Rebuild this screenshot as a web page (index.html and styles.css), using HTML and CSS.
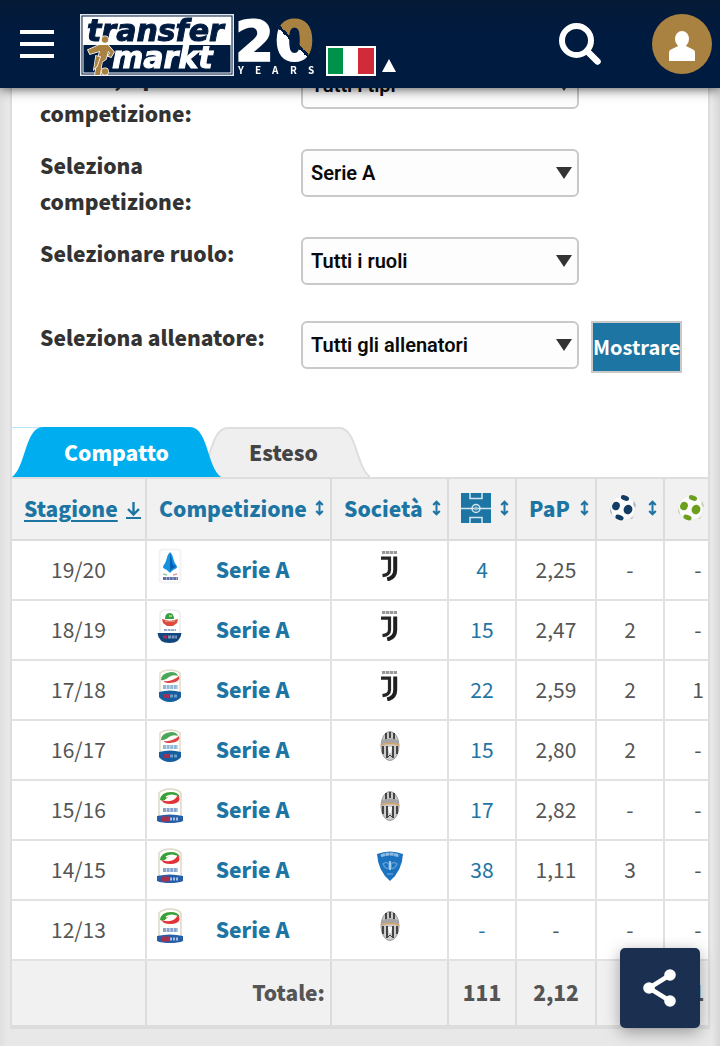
FILE: index.html
```html
<!DOCTYPE html>
<html lang="it">
<head>
<meta charset="utf-8">
<meta name="viewport" content="width=device-width, initial-scale=1">
<title>Transfermarkt</title>
<link rel="stylesheet" href="styles.css">
</head>
<body>
<svg class="defs" aria-hidden="true">
  <symbol id="sort" viewBox="0 0 9 16"><path d="M4.500 2v12M1.200 5l3.300-3.300L7.800 5M1.200 11l3.300 3.300L7.800 11" fill="none" stroke="#1d75a3" stroke-width="2"/></symbol>
  <symbol id="ball" viewBox="0 0 28 28">
    <circle cx="14" cy="14" r="12.500" fill="#fbfbfb" stroke="#ececec" stroke-width="1"/>
    <g fill="currentColor">
      <ellipse cx="16" cy="4" rx="4.300" ry="2.500" transform="rotate(22 16 4)"/>
      <ellipse cx="7" cy="12" rx="3.800" ry="4.300" transform="rotate(20 7 12)"/>
      <ellipse cx="19" cy="15.500" rx="4.300" ry="4.800" transform="rotate(20 19 15.500)"/>
      <ellipse cx="10.500" cy="23.500" rx="4.300" ry="2.500" transform="rotate(22 10.500 23.500)"/>
      <path d="M25 7l2 4-1 3-2-4zM1 14l2 5v2l-2-3zM21 25l4-3-2 3z" opacity=".3"/>
    </g>
  </symbol>
  <symbol id="league-19" viewBox="0 0 28 36">
    <rect x="3.500" y="1.500" width="21" height="33" rx="3" fill="#fff" stroke="#f3f3f3" stroke-width="2"/>
    <path d="M14 4c3 3 3 6 4 9 1 3 3 4 3 6 0 2-4 2-7 6-3-4-7-4-7-6 0-2 2-3 3-6 1-3 1-6 4-9z" fill="#1593e0"/>
    <path d="M14 5v18c2-3 5-3 6-5-3 0-4-3-4-6z" fill="#0a5fb5"/>
    <path d="M7 26l4 1" stroke="#8fd09b" stroke-width="1.500"/><path d="M17 27l4-1" stroke="#eb9a9a" stroke-width="1.500"/>
    <path d="M7 30.500h15" stroke="#5f70a8" stroke-width="3" stroke-dasharray="3 .4"/>
  </symbol>
  <symbol id="league-18" viewBox="0 0 28 36">
    <path d="M4 26V7q0-5 6-5h8q6 0 6 5v19z" fill="#fff" stroke="#f1f1f1" stroke-width="2"/>
    <path d="M9 11q0-6 4.500-6t4.500 6z" fill="#34a04a"/><path d="M13 7h3v2h-3z" fill="#bcc653"/>
    <path d="M6 11l8 2 8-2-1 4-4 3h-6l-4-3z" fill="#dd4b3e"/><path d="M9 13h10" stroke="#efb5a0" stroke-width="1"/>
    <path d="M8 22h12" stroke="#9aa9c6" stroke-width="2" stroke-dasharray="3 .6"/>
    <path d="M1.500 25h24q-1 10-12 10t-12-10z" fill="#12467f"/>
    <path d="M7 29h4" stroke="#a02f58" stroke-width="3"/><path d="M12 29h9" stroke="#7795bd" stroke-width="3" stroke-dasharray="3 .6"/>
  </symbol>
  <symbol id="league-17" viewBox="0 0 28 36">
    <path d="M4 5q4-3 10-3t10 3v25q-5 3-10 3T4 30z" fill="#fffefa" stroke="#e3dcc8" stroke-width="1.500"/>
    <path d="M5 12q0-7 10-8 6 0 7 4-5-2-9 1-4 4-8 3z" fill="#49a65a"/>
    <path d="M23 8q2 6-9 7-6 0-6-2 8 1 15-5z" fill="#dc4546"/>
    <path d="M7 19h15" stroke="#91b8d6" stroke-width="4" stroke-dasharray="3 .6"/>
    <path d="M3 24q11-3 22 0v5q-4 5-11 5T3 29z" fill="#155e9f"/>
    <path d="M8 28h5" stroke="#a02f58" stroke-width="4"/><path d="M14 28h8" stroke="#6f9cc6" stroke-width="3" stroke-dasharray="3 1"/>
  </symbol>
  <symbol id="league-15" viewBox="0 0 28 36">
    <path d="M3 5q4-4 11-4t11 4v28H3z" fill="#fffefa" stroke="#ddd8c8" stroke-width="1.500"/>
    <path d="M4 12q1-8 11-8 7 0 9 5-7-4-12 0-4 5-8 3z" fill="#38a038"/>
    <path d="M22 7q5 8-7 9-9 0-9-4 11 4 16-5z" fill="#e23238"/><path d="M10 9q5-3 9-1" stroke="#fff" stroke-width="1.500" fill="none"/>
    <path d="M7 22h15" stroke="#86a6d1" stroke-width="4" stroke-dasharray="3 .6"/>
    <path d="M1 28q13-3 26 0v5q-5 2-13 2T1 33z" fill="#275eaa"/>
    <path d="M5 31h8" stroke="#a8304f" stroke-width="5"/><path d="M14 31h9" stroke="#a6bedd" stroke-width="3" stroke-dasharray="2 1"/>
  </symbol>
  <symbol id="juve-new" viewBox="0 0 20 30">
    <path d="M2 1.500h15" stroke="#999" stroke-width="3" stroke-dasharray="3.300 .6"/>
    <path d="M1 7.200h8.500v11.500q0 5-7 6" fill="none" stroke="#262626" stroke-width="3.200"/>
    <path d="M15.200 5.500V19q0 7.500-8 9.500" fill="none" stroke="#202020" stroke-width="4"/>
  </symbol>
  <symbol id="juve-old" viewBox="0 0 20 30">
    <ellipse cx="10" cy="15" rx="9" ry="14.500" fill="#ccc" stroke="#999" stroke-width="1"/>
    <path d="M6 2v8M10 1v6M14 2v8M3 15v8M7 15v12M13 15v12M17 15v8" stroke="#444" stroke-width="2"/>
    <path d="M2 9q8-3 16 0v4q-8-2-16 0z" fill="#a5a5a5"/>
    <path d="M1 14q9-3 18 0" fill="none" stroke="#d6a260" stroke-width="1.500"/>
    <path d="M8 16h4l-1 6H9z" fill="#fafafa"/><path d="M7 27l3-3 3 3" stroke="#444" fill="none"/>
  </symbol>
  <symbol id="empoli" viewBox="0 0 28 30">
    <path d="M1 3q13-5 26 0-1 17-13 27Q2 20 1 3z" fill="#1b72bf"/>
    <path d="M5 5q9-4 18 0" fill="none" stroke="#8fbce3" stroke-width="3" stroke-dasharray="4 .5"/>
    <path d="M7 13q3-3 6 0v4q-3 2-6-4zM21 13q-3-3-6 0v4q3 2 6-4zM11 23h6" fill="none" stroke="#5c9ed6" stroke-width="1.500"/>
    <path d="M14 10v9" stroke="#a9cdec" stroke-width="2"/>
  </symbol>
  <symbol id="slope-left" viewBox="0 0 31 50"><path d="M0 50C14 40 13 0 31 0v50z" fill="currentColor"/></symbol>
</svg>

<header class="topbar">
  <button class="menu" aria-label="Menu"><span></span><span></span><span></span></button>
  <a class="brand" href="#" aria-label="Transfermarkt">
    <svg width="236" height="62" viewBox="0 0 236 62">
      <defs>
        <linearGradient id="zero" gradientUnits="userSpaceOnUse" x1="209" y1="33" x2="219" y2="23">
          <stop offset="0" stop-color="#fff"/><stop offset=".4" stop-color="#fff"/>
          <stop offset=".4" stop-color="#001b40"/><stop offset=".6" stop-color="#001b40"/>
          <stop offset=".6" stop-color="#a98141"/><stop offset="1" stop-color="#a98141"/>
        </linearGradient>
      </defs>
      <rect x=".75" y=".75" width="152.500" height="60.500" fill="#001b40" stroke="#e4e8ed" stroke-width="1.500"/>
      <rect x="3" y="3" width="148" height="56" fill="none" stroke="#fff" stroke-width="1"/>
      <path d="M3 3h148v28H3z" fill="#fff"/>
      <text class="wordmark" x="7" y="27" fill="#001b40" stroke="#001b40">transfer</text>
      <text class="wordmark" x="32" y="54" fill="#fff" stroke="#fff">markt</text>
      <g fill="#a98141" stroke="#fff" stroke-width="1.500" paint-order="stroke">
        <path d="M8 36l11-5h9l6 7-3 5-3-1 2-3-2-2-2 8-4 3-2 13h-5l2-14 3-10-10 3z"/>
        <path d="M16 42l4 1-3 9-3 3z"/>
        <circle cx="25" cy="25.500" r="3.200"/>
        <circle cx="25" cy="57.500" r="3.200"/>
      </g>
      <text class="twenty" x="155" y="46" fill="#fff" stroke="#fff">2</text>
      <text class="twenty" x="195" y="46" fill="url(#zero)" stroke="url(#zero)">0</text>
      <text class="years" x="158 175 192 210 228" y="60" fill="#fff">YEARS</text>
    </svg>
  </a>
  <button class="country" aria-label="Italia">
    <span class="flag"></span>
    <svg width="14" height="13" viewBox="0 0 14 13"><path d="M7 0l7 13H0z" fill="#fff"/></svg>
  </button>
  <button class="search" aria-label="Cerca">
    <svg width="42" height="42" viewBox="0 0 42 42"><circle cx="17.500" cy="17.500" r="14.500" fill="none" stroke="#fff" stroke-width="6"/><path d="M28 28l10.500 10.500" stroke="#fff" stroke-width="6.500" stroke-linecap="round"/></svg>
  </button>
  <button class="user" aria-label="Profilo">
    <svg width="26" height="30" viewBox="0 0 26 30"><ellipse cx="13" cy="8" rx="7" ry="8" fill="#fff"/><path d="M9 12h8v3l8 4q1 1 1 3v8H0v-8q0-2 1-3l8-4z" fill="#fff"/></svg>
  </button>
</header>

<main class="box">
  <form class="filters">
    <label for="type">Torneo, tipo di competizione:</label>
    <span class="select"><select id="type"><option>Tutti i tipi</option></select></span>
    <label for="competition">Seleziona competizione:</label>
    <span class="select"><select id="competition"><option>Serie A</option></select></span>
    <label for="role">Selezionare ruolo:</label>
    <span class="select"><select id="role"><option>Tutti i ruoli</option></select></span>
    <label for="coach">Seleziona allenatore:</label>
    <span class="select"><select id="coach"><option>Tutti gli allenatori</option></select></span>
    <button class="submit" type="button">Mostrare</button>
  </form>

  <nav class="tabs">
    <a class="tab active" href="#compatto">
      <svg width="31" height="50"><path d="M0 .5h31" stroke="#b9e6f8"/><use href="#slope-left"/></svg>
      <span>Compatto</span>
      <svg class="flip" width="31" height="50"><use href="#slope-left"/></svg>
    </a>
    <a class="tab" href="#esteso">
      <svg width="31" height="50"><use href="#slope-left"/><path d="M0 50C14 40 13 1 31 1" fill="none" stroke="#dedede" stroke-width="2"/></svg>
      <span>Esteso</span>
      <svg class="flip" width="31" height="50"><use href="#slope-left"/><path d="M0 50C14 40 13 1 31 1" fill="none" stroke="#dedede" stroke-width="2"/></svg>
    </a>
  </nav>

  <div class="scroller">
    <table>
      <colgroup><col class="c-season"><col class="c-comp"><col class="c-club"><col class="c-num"><col class="c-ppg"><col class="c-num"><col class="c-num"></colgroup>
      <thead>
        <tr>
          <th><a class="sorted" href="#"><span>Stagione</span><svg width="15" height="18" viewBox="0 0 15 18"><path d="M7.500 1v12M2 8l5.500 5.500L13 8" fill="none" stroke="#1d75a3" stroke-width="2.400"/><path d="M0 17h15" stroke="#1d75a3" stroke-width="2"/></svg></a></th>
          <th><a href="#">Competizione<svg width="9" height="16"><use href="#sort"/></svg></a></th>
          <th><a href="#">Società<svg width="9" height="16"><use href="#sort"/></svg></a></th>
          <th><a href="#" aria-label="Presenze"><svg width="30" height="30" viewBox="0 0 30 30"><path d="M0 0h30v30H0z" fill="#1d75a3"/><g fill="none" stroke="#d6e5ee" stroke-width="1.500"><path d="M0 15.500h30M9 0v5.500h12V0M9 30v-5.500h12V30"/><circle cx="15" cy="15.500" r="4"/></g><circle cx="15" cy="15.500" r="2" fill="#9cc0d6"/></svg><svg width="9" height="16"><use href="#sort"/></svg></a></th>
          <th><a href="#">PaP<svg width="9" height="16"><use href="#sort"/></svg></a></th>
          <th><a href="#" aria-label="Gol"><svg class="goals" width="28" height="28"><use href="#ball"/></svg><svg width="9" height="16"><use href="#sort"/></svg></a></th>
          <th><a href="#" aria-label="Assist"><svg class="assists" width="28" height="28"><use href="#ball"/></svg><svg width="9" height="16"><use href="#sort"/></svg></a></th>
        </tr>
      </thead>
      <tbody>
        <tr><td>19/20</td><td><div class="comp"><svg width="28" height="36"><use href="#league-19"/></svg><a href="#">Serie A</a></div></td><td><svg class="club" width="20" height="30"><use href="#juve-new"/></svg></td><td><a href="#">4</a></td><td>2,25</td><td>-</td><td>-</td></tr>
        <tr><td>18/19</td><td><div class="comp"><svg width="28" height="36"><use href="#league-18"/></svg><a href="#">Serie A</a></div></td><td><svg class="club" width="20" height="30"><use href="#juve-new"/></svg></td><td><a href="#">15</a></td><td>2,47</td><td>2</td><td>-</td></tr>
        <tr><td>17/18</td><td><div class="comp"><svg width="28" height="36"><use href="#league-17"/></svg><a href="#">Serie A</a></div></td><td><svg class="club" width="20" height="30"><use href="#juve-new"/></svg></td><td><a href="#">22</a></td><td>2,59</td><td>2</td><td>1</td></tr>
        <tr><td>16/17</td><td><div class="comp"><svg width="28" height="36"><use href="#league-17"/></svg><a href="#">Serie A</a></div></td><td><svg class="club" width="20" height="30"><use href="#juve-old"/></svg></td><td><a href="#">15</a></td><td>2,80</td><td>2</td><td>-</td></tr>
        <tr><td>15/16</td><td><div class="comp"><svg width="28" height="36"><use href="#league-15"/></svg><a href="#">Serie A</a></div></td><td><svg class="club" width="20" height="30"><use href="#juve-old"/></svg></td><td><a href="#">17</a></td><td>2,82</td><td>-</td><td>-</td></tr>
        <tr><td>14/15</td><td><div class="comp"><svg width="28" height="36"><use href="#league-15"/></svg><a href="#">Serie A</a></div></td><td><svg class="club" width="28" height="30"><use href="#empoli"/></svg></td><td><a href="#">38</a></td><td>1,11</td><td>3</td><td>-</td></tr>
        <tr><td>12/13</td><td><div class="comp"><svg width="28" height="36"><use href="#league-15"/></svg><a href="#">Serie A</a></div></td><td><svg class="club" width="20" height="30"><use href="#juve-old"/></svg></td><td><a href="#">-</a></td><td>-</td><td>-</td><td>-</td></tr>
      </tbody>
      <tfoot>
        <tr><td></td><td class="total">Totale:</td><td></td><td>111</td><td>2,12</td><td></td><td>1</td></tr>
      </tfoot>
    </table>
  </div>
</main>

<button class="share" aria-label="Condividi">
  <svg width="34" height="38" viewBox="0 0 34 38"><path d="M27 6L6 19l21 13" fill="none" stroke="#fff" stroke-width="4.500"/><g fill="#fff"><circle cx="27" cy="6" r="5.800"/><circle cx="6" cy="19" r="5.800"/><circle cx="27" cy="32" r="5.800"/></g></svg>
</button>
</body>
</html>
```
FILE: styles.css
```css
* { box-sizing: border-box; }
body {
  margin: 0;
  min-height: 100vh;
  padding: 0 10px 17px;
  background: linear-gradient(90deg, #e0e0e0, #e8e8e8 8px, #e8e8e8 calc(100% - 8px), #d6d6d6);
  color: #555;
  font: 21px/36px "Noto Sans CJK SC", "Noto Sans CJK JP", "Noto Sans", sans-serif;
}
svg { display: block; flex: none; }
a { color: #1d75a3; text-decoration: none; }
button { padding: 0; border: 0; background: none; font: inherit; cursor: pointer; }
.defs { position: absolute; width: 0; height: 0; }

.topbar {
  position: fixed;
  z-index: 5;
  top: 0;
  left: 0;
  right: 0;
  height: 88px;
  padding: 0 8px 0 20px;
  display: flex;
  align-items: center;
  background: linear-gradient(#061a36, #001b40 40%);
  box-shadow: 0 0 12px rgba(0, 0, 0, .8);
}
.menu { display: grid; gap: 8px; width: 34px; margin-right: 26px; }
.menu span { height: 4px; background: #fff; }
.brand { margin-top: 2px; }
.brand svg { overflow: visible; }
.wordmark { font: italic bold 30px "DejaVu Sans", sans-serif; stroke-width: 1px; }
.twenty { font: bold 56px "DejaVu Sans", sans-serif; stroke-width: 2px; }
.years { font: bold 10px "Noto Sans CJK SC", sans-serif; }
.country { display: flex; align-items: flex-end; gap: 6px; align-self: flex-end; margin: 0 auto 12px 10px; }
.country svg { margin-bottom: 4px; }
.flag {
  width: 50px;
  height: 30px;
  border: 2px solid #fff;
  background: linear-gradient(90deg, #00924a 33%, #fff 33%, #fff 66%, #cf2b38 66%);
}
.search { margin-right: 51px; }
.user {
  width: 60px;
  height: 60px;
  display: grid;
  place-items: center;
  padding-top: 4px;
  border-radius: 50%;
  background: #a98141;
}

.box { border: 2px solid #ddd; border-top: 0; border-bottom-width: 4px; background: #fff; }
.filters {
  display: grid;
  grid-template-columns: 249px 1fr 91px;
  grid-auto-rows: minmax(68px, auto);
  gap: 16px 12px;
  padding: 61px 26px 38px 28px;
  align-items: start;
}
.filters label {
  grid-column: 1;
  min-height: 72px;
  margin: -2px 0 2px;
  padding-right: 12px;
  color: #333;
  font-weight: 900;
}
.filters label:nth-of-type(n + 3) { min-height: 0; }
.select { position: relative; }
.select::after {
  content: "";
  position: absolute;
  right: 7px;
  top: 18px;
  width: 16px;
  height: 12px;
  background: #333;
  clip-path: polygon(0 0, 100% 0, 50% 100%);
  pointer-events: none;
}
select {
  display: block;
  width: 100%;
  height: 48px;
  padding: 0 28px 0 8px;
  border: 2px solid #c9c9c9;
  border-radius: 6px;
  background: #fdfdfd;
  color: #0a0a0a;
  appearance: none;
  font: 600 20px Roboto, sans-serif;
}
.submit {
  height: 52px;
  border: 2px solid #c9c9c9;
  background: #1d75a3;
  color: #fff;
  font-size: 20px;
  font-weight: bold;
}

.tabs { display: flex; }
.tab { display: flex; color: #efefef; }
.tab span {
  height: 50px;
  padding: 0 21px;
  border-top: 2px solid #dedede;
  background: #efefef;
  color: #444;
  font-weight: 900;
  line-height: 46px;
}
.tab.active { position: relative; z-index: 1; color: #00aeef; }
.tab.active span { border-top-color: #00aeef; background: #00aeef; color: #fff; }
.tab + .tab { margin-left: -24px; }
.flip { transform: scaleX(-1); }

.scroller { overflow-x: auto; scrollbar-width: none; border-top: 2px solid #ddd; }
table { width: 721px; table-layout: fixed; border-collapse: separate; border-spacing: 0; }
.c-season { width: 135px; }
.c-comp { width: 185px; }
.c-club { width: 117px; }
.c-num { width: 68px; }
.c-ppg { width: 80px; }
th, td {
  height: 60px;
  padding: 0 0 2px;
  border-right: 2px solid #e2e2e2;
  border-bottom: 2px solid #e2e2e2;
  text-align: center;
}
th { height: 62px; border-color: #dcdcdc; background: #f1f1f1; font-weight: 900; }
th a { display: flex; align-items: center; justify-content: space-between; padding: 0 6px 0 12px; }
th a.sorted { padding-right: 4px; }
.sorted svg { margin-top: 4px; }
.sorted span { text-decoration: underline; text-decoration-thickness: 2px; text-underline-offset: 3px; }
.goals { color: #123c63; }
.assists { color: #6c9f1c; }
.comp { display: grid; grid-template-columns: 46px 1fr; align-items: center; }
.comp svg { justify-self: center; margin-bottom: 6px; }
.comp a { padding-right: 18px; font-weight: 900; }
.club { margin: 0 auto 6px; }
tfoot td { height: 64px; border-bottom: 0; border-color: #dcdcdc; background: #f1f1f1; font-weight: 900; }
tfoot .total { padding-right: 5px; text-align: right; }

.share {
  position: fixed;
  z-index: 4;
  right: 20px;
  bottom: 18px;
  width: 80px;
  height: 80px;
  display: grid;
  place-items: center;
  border-radius: 5px;
  background: #1b3050;
  box-shadow: 0 4px 16px rgba(0, 0, 0, .35);
}
```
